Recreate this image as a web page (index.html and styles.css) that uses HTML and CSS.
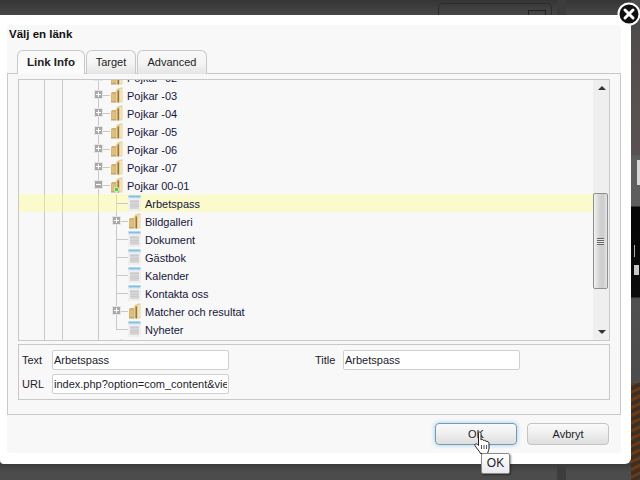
FILE: index.html
```html
<!DOCTYPE html>
<html lang="sv">
<head>
    <meta charset="UTF-8">
    <title>Välj en länk</title>
    <link rel="stylesheet" href="styles.css">
</head>
<body>
    <svg class="defs" width="0" height="0">
        <symbol id="folder" viewBox="0 0 13 16">
            <path d="M1 15V6.500L2 5H6V15Z" fill="#d2b06c"/>
            <path d="M1.500 7H5.500V14H1.500Z" fill="#dcc083"/>
            <path d="M6 15.500V3.500L7.500 1.500L10.500 0.500H12.500V15L11 15.500Z" fill="#e8cf95"/>
            <path d="M10 2H12V14.500H10Z" fill="#f1e2ba"/>
            <path d="M7.500 3.500H9V15.500H7.500Z" fill="#94763c"/>
            <path d="M1 14.500H6V15.500H1Z" fill="#bd9c5c"/>
        </symbol>
        <symbol id="page" viewBox="0 0 13 16">
            <path d="M0 0H13V16H0Z" fill="#f0f0f0"/>
            <path d="M0.500 0.500H12.500V2.500H0.500Z" fill="#7cc0ea"/>
            <path d="M0.500 3H12.500V3.500H0.500Z" fill="#cfe6f5"/>
            <path d="M2 5H11V14H2Z" fill="#d6d6d6"/>
            <path d="M2 6.500H11V7H2ZM2 9H11V9.500H2ZM2 11.500H11V12H2Z" fill="#bdbdbd"/>
        </symbol>
    </svg>

    <div class="backdrop">
        <div class="bg-box"><span class="bg-text">Publicerad</span><span class="bg-check"></span></div>
        <div class="bg-band"></div>
        <div class="bg-strip"></div>
    </div>

    <div class="dialog">
        <div class="dialog-inner">
            <div class="dialog-title">Välj en länk</div>

            <div class="tabs">
                <div class="tab active">Link Info</div>
                <div class="tab tab-target">Target</div>
                <div class="tab tab-advanced">Advanced</div>
            </div>

            <div class="panel">
                <div class="tree">
                    <div class="tree-list">
                        <div class="row"><span class="tog plus"></span><span class="dash"></span><svg class="ico"><use href="#folder"/></svg><span class="label">Pojkar -02</span></div>
                        <div class="row"><span class="tog plus"></span><span class="dash"></span><svg class="ico"><use href="#folder"/></svg><span class="label">Pojkar -03</span></div>
                        <div class="row"><span class="tog plus"></span><span class="dash"></span><svg class="ico"><use href="#folder"/></svg><span class="label">Pojkar -04</span></div>
                        <div class="row"><span class="tog plus"></span><span class="dash"></span><svg class="ico"><use href="#folder"/></svg><span class="label">Pojkar -05</span></div>
                        <div class="row"><span class="tog plus"></span><span class="dash"></span><svg class="ico"><use href="#folder"/></svg><span class="label">Pojkar -06</span></div>
                        <div class="row"><span class="tog plus"></span><span class="dash"></span><svg class="ico"><use href="#folder"/></svg><span class="label">Pojkar -07</span></div>
                        <div class="row"><span class="tog minus"></span><span class="dash"></span><span class="open-ico"><svg class="ico"><use href="#folder"/></svg><span class="green-dot"></span></span><span class="label">Pojkar 00-01</span></div>
                        <div class="kids">
                            <div class="row sub leaf selected"><span class="dash"></span><svg class="ico"><use href="#page"/></svg><span class="label">Arbetspass</span></div>
                            <div class="row sub"><span class="tog plus"></span><span class="dash"></span><svg class="ico"><use href="#folder"/></svg><span class="label">Bildgalleri</span></div>
                            <div class="row sub leaf"><span class="dash"></span><svg class="ico"><use href="#page"/></svg><span class="label">Dokument</span></div>
                            <div class="row sub leaf"><span class="dash"></span><svg class="ico"><use href="#page"/></svg><span class="label">Gästbok</span></div>
                            <div class="row sub leaf"><span class="dash"></span><svg class="ico"><use href="#page"/></svg><span class="label">Kalender</span></div>
                            <div class="row sub leaf"><span class="dash"></span><svg class="ico"><use href="#page"/></svg><span class="label">Kontakta oss</span></div>
                            <div class="row sub"><span class="tog plus"></span><span class="dash"></span><svg class="ico"><use href="#folder"/></svg><span class="label">Matcher och resultat</span></div>
                            <div class="row sub leaf"><span class="dash"></span><svg class="ico"><use href="#page"/></svg><span class="label">Nyheter</span></div>
                        </div>
                        <div class="row"><span class="tog plus"></span><span class="dash"></span><svg class="ico"><use href="#folder"/></svg></div>
                    </div>
                    <div class="scrollbar">
                        <div class="arrow up"></div>
                        <div class="thumb"><span class="grip"></span></div>
                        <div class="arrow down"></div>
                    </div>
                </div>

                <div class="link-form">
                    <label class="field-label" for="link-text">Text</label>
                    <input class="field" id="link-text" type="text" value="Arbetspass">
                    <label class="field-label title-label" for="link-title">Title</label>
                    <input class="field" id="link-title" type="text" value="Arbetspass">
                    <label class="field-label url-label" for="link-url">URL</label>
                    <input class="field" id="link-url" type="text" value="index.php?option=com_content&amp;view=article&amp;id=12">
                </div>
            </div>

            <div class="dialog-buttons">
                <button class="btn focused" type="button">OK</button>
                <button class="btn" type="button">Avbryt</button>
            </div>
        </div>
    </div>

    <!-- stängknapp, muspekare och tooltip ligger ovanpå dialogen -->
    <div class="close-btn">
        <svg width="24" height="24" viewBox="0 0 24 24">
            <circle cx="12" cy="12" r="10.500" fill="#111" stroke="#fff" stroke-width="2"/>
            <path d="M8 8L16 16M16 8L8 16" stroke="#fff" stroke-width="3" stroke-linecap="round"/>
        </svg>
    </div>
    <svg class="cursor" width="17" height="23" viewBox="0 0 17 23">
        <path d="M4.500 1.500C5.500 0.500 7 1 7 2.500V9C8 8 9.500 8.500 9.500 9.500C10.500 9 12 9.500 12 10.500C13 10 15 10.500 15 12.500V17C15 19 14 20.500 13.500 22.500H6.500C5.500 20 3 18 1 14.500C0.500 13 2 12 3.500 13.500L4.500 14.500Z" fill="#fff" stroke="#222" stroke-width="1"/>
        <path d="M7.500 14V18M10 14V18M12.500 14V18" stroke="#555" stroke-width="1"/>
    </svg>
    <div class="tooltip">OK</div>
</body>
</html>
```

FILE: styles.css
```css
body {
    margin: 0;
    width: 640px;
    height: 480px;
    overflow: hidden;
    background: #4b4b4b;
    font-family: "Liberation Sans", Arial, sans-serif;
    font-size: 11px;
    color: #1c1c2c;
}

.defs {
    position: absolute;
}

/* sidan bakom dialogen */
.backdrop {
    position: absolute;
    top: 0;
    left: 0;
    width: 640px;
    height: 480px;
    background: linear-gradient(#353535 0, #474747 15px, #474747 463px, #3a3a3a 464px, #4c4c4c 472px);
}

.bg-box {
    position: absolute;
    left: 438px;
    top: 3px;
    width: 112px;
    height: 30px;
    border: 1px solid #2c2c2c;
    border-radius: 4px;
}

.bg-text {
    position: absolute;
    left: 9px;
    top: 9px;
    color: #1c1c1c;
    font-size: 12px;
    font-weight: bold;
}

.bg-check {
    position: absolute;
    left: 89px;
    top: 6px;
    width: 16px;
    height: 16px;
    border: 1px solid #222;
}

.bg-band {
    position: absolute;
    left: 557px;
    top: 0;
    width: 9px;
    height: 480px;
    background: #3c3c3c;
}

.bg-strip {
    position: absolute;
    left: 631px;
    top: 0;
    width: 9px;
    height: 480px;
    background:
        linear-gradient(#d8d8d8, #d8d8d8) 6px 160px / 3px 25px no-repeat,
        linear-gradient(#b0b0b0, #b0b0b0) 3px 245px / 1px 12px no-repeat,
        linear-gradient(#c8c8c8, #c8c8c8) 3px 265px / 5px 10px no-repeat,
        repeating-linear-gradient(155deg, #6b3a12 0, #6b3a12 3px, #3a3026 3px, #3a3026 7px) 0 383px / 9px 97px no-repeat,
        linear-gradient(#4c4c4c 0, #4c4c4c 30px, #514d4c 31px, #5a5252 155px, #5e5e5e 156px, #5e5e5e 206px, #050505 207px, #0c0c0c 297px, #505050 298px, #4c4c4c 383px);
}

/* dialog */
.dialog {
    position: absolute;
    left: 0;
    top: 15px;
    width: 631px;
    height: 449px;
    box-sizing: border-box;
    padding: 10px 10px 11px 7px;
    background: #ffffff;
    border-radius: 0 0 6px 4px;
}

.dialog-inner {
    height: 100%;
    display: flex;
    flex-direction: column;
    background: #f8f8f8;
    border-radius: 3px;
}

.dialog-title {
    padding: 3px 0 0 2px;
    height: 22px;
    line-height: 13px;
    font-size: 11.500px;
    font-weight: bold;
    color: #111;
}

.tabs {
    display: flex;
    gap: 1px;
    height: 23px;
    padding-left: 10px;
}

.tab {
    box-sizing: border-box;
    height: 24px;
    border: 1px solid #c8c8c8;
    border-bottom: none;
    border-radius: 6px 6px 0 0;
    background: linear-gradient(#f9f9f9, #f4f4f4 55%, #e4e4e4);
    line-height: 23px;
    text-align: center;
    color: #222;
    position: relative;
}

.tab-target {
    width: 50px;
}

.tab-advanced {
    width: 70px;
}

.tab.active {
    width: 68px;
    font-size: 11.500px;
    font-weight: bold;
    background: linear-gradient(#f8f8f8, #fcfcfc);
    z-index: 1;
}

.panel {
    box-sizing: border-box;
    height: 342px;
    border: 1px solid #c8c8c8;
    padding: 5px 10px 0;
}

.tree {
    display: flex;
    height: 262px;
    box-sizing: border-box;
    border: 1px solid #c8c8c8;
    overflow: hidden;
}

.tree-list {
    flex: 1;
    margin-top: -12px;
    /* stödlinjer för de yttre nivåerna */
    background:
        linear-gradient(#c8c8c8, #c8c8c8) 25px 0 / 1px 100% no-repeat,
        linear-gradient(#c8c8c8, #c8c8c8) 43px 0 / 1px 100% no-repeat,
        linear-gradient(#c8c8c8, #c8c8c8) 79px 0 / 1px 100% no-repeat;
}

.row {
    display: flex;
    align-items: center;
    height: 18px;
    padding-left: 75px;
}

.row.sub {
    padding-left: 93px;
}

.row.selected {
    background: rgba(255, 255, 120, 0.34);
}

.tog {
    box-sizing: border-box;
    width: 9px;
    height: 9px;
    border: 1px solid #e6e6e6;
    border-radius: 1px;
    background: #a8a8a8;
    position: relative;
    flex: none;
    margin-top: -1px;
}

.tog::before {
    content: "";
    position: absolute;
    left: 1px;
    top: 3px;
    width: 5px;
    height: 1px;
    background: #fff;
}

.tog.plus::after {
    content: "";
    position: absolute;
    left: 3px;
    top: 1px;
    width: 1px;
    height: 5px;
    background: #fff;
}

.dash {
    width: 7px;
    height: 1px;
    background: #c8c8c8;
    flex: none;
}

.row.leaf .dash {
    width: 12px;
    margin-left: 4px;
}

.ico {
    width: 13px;
    height: 16px;
    flex: none;
}

.open-ico {
    display: flex;
    position: relative;
}

.green-dot {
    position: absolute;
    left: 4px;
    bottom: 1px;
    width: 5px;
    height: 5px;
    border-radius: 1px;
    background: #62c23e;
    border: 1px solid #c9eeb8;
    box-sizing: border-box;
}

.label {
    margin-left: 4px;
    margin-top: 2px;
    line-height: 14px;
    color: #16163a;
    white-space: nowrap;
}

.kids {
    background: linear-gradient(#c8c8c8, #c8c8c8) 97px 0 / 1px calc(100% - 9px) no-repeat;
}

/* rullist */
.scrollbar {
    position: relative;
    display: flex;
    flex-direction: column;
    width: 16px;
    flex: none;
    background: #efefef;
}

.arrow {
    height: 113px;
    position: relative;
}

.arrow.down {
    height: 51px;
}

.arrow::after {
    content: "";
    position: absolute;
    left: 5px;
    border-left: 4px solid transparent;
    border-right: 4px solid transparent;
}

.arrow.up::after {
    top: 6px;
    border-bottom: 4px solid #333;
}

.arrow.down::after {
    bottom: 6px;
    border-top: 4px solid #333;
}

.thumb {
    box-sizing: border-box;
    width: 15px;
    height: 96px;
    border: 1px solid #8f8f8f;
    border-radius: 2px;
    background: linear-gradient(90deg, #f2f2f2, #d4d4d4 40%, #cdcdcd 70%, #e6e6e6);
    display: flex;
    align-items: center;
    justify-content: center;
}

.grip {
    width: 7px;
    height: 7px;
    background: repeating-linear-gradient(#666 0, #666 1px, #e8e8e8 1px, #e8e8e8 2px);
}

/* formulär */
.link-form {
    display: grid;
    grid-template-columns: 30px 177px 86px 28px 177px;
    grid-auto-rows: 20px;
    row-gap: 4px;
    align-content: start;
    box-sizing: border-box;
    height: 56px;
    margin-top: 3px;
    padding: 5px 0 0 3px;
    border: 1px solid #c8c8c8;
}

.field-label {
    line-height: 20px;
    color: #1c1c2c;
}

.title-label {
    grid-column: 4;
}

.url-label {
    grid-column: 1;
}

.field {
    box-sizing: border-box;
    width: 177px;
    height: 20px;
    padding: 0 1px;
    border: 1px solid #cfcfcf;
    border-radius: 2px;
    background: #fff;
    font-family: inherit;
    font-size: 11px;
    color: #1c1c2c;
    outline: none;
}

/* knappar */
.dialog-buttons {
    display: flex;
    justify-content: flex-end;
    gap: 10px;
    padding: 8px 12px 0 0;
}

.btn {
    width: 82px;
    height: 22px;
    padding: 0;
    border: 1px solid #c4c4c4;
    border-radius: 4px;
    background: linear-gradient(#fafafa, #f0f0f0 45%, #dedede);
    font-family: inherit;
    font-size: 11px;
    color: #1c1c2c;
}

.btn.focused {
    border-color: #6f9cb8;
    box-shadow: 0 0 4px rgba(120, 180, 225, 0.7);
}

.close-btn {
    position: absolute;
    left: 617px;
    top: 2px;
    width: 24px;
    height: 24px;
}

.cursor {
    position: absolute;
    left: 474px;
    top: 431px;
}

.tooltip {
    position: absolute;
    left: 481px;
    top: 453px;
    box-sizing: border-box;
    width: 29px;
    height: 21px;
    border: 1px solid #8a8a8a;
    border-radius: 2px;
    background: linear-gradient(#ffffff, #e9e9f0);
    box-shadow: 1px 1px 2px rgba(0, 0, 0, 0.45);
    text-align: center;
    line-height: 19px;
    font-size: 12px;
    color: #222;
}
```
